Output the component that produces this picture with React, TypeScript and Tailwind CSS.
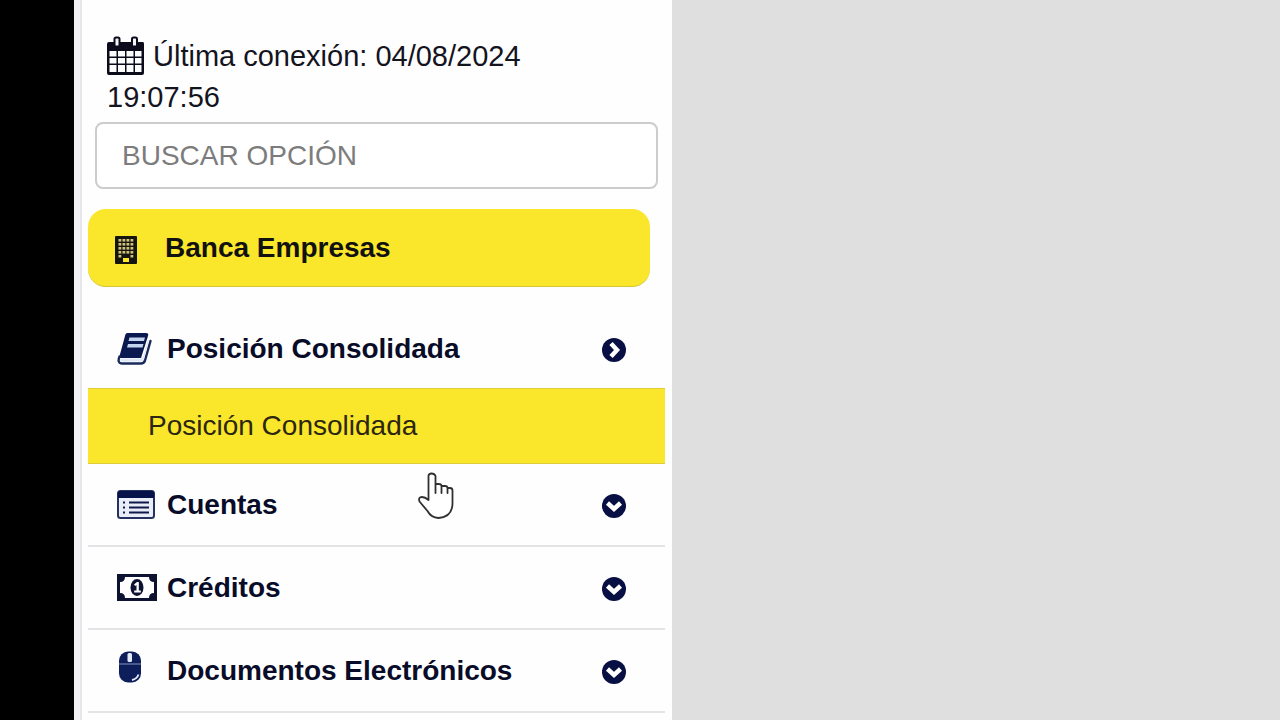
import type { ReactNode } from "react";

function CalendarIcon() {
  return (
    <svg viewBox="0 0 38 40" className="mr-2 inline-block h-10 w-[38px] align-[-10px]" fill="#0b0b1c" aria-hidden="true">
      <path
        fillRule="evenodd"
        d="M2 6H36Q37 6 37 8V37Q37 39 35 39H2Q0 39 0 37V8Q0 6 2 6ZM2.500 15V20.500H9.500V15ZM11 15V20.500H18V15ZM19.500 15V20.500H26.500V15ZM28 15V20.500H34.500V15ZM2.500 22V27.500H9.500V22ZM11 22V27.500H18V22ZM19.500 22V27.500H26.500V22ZM28 22V27.500H34.500V22ZM2.500 29V36H9.500V29ZM11 29V36H18V29ZM19.500 29V36H26.500V29ZM28 29V36H34.500V29Z"
      />
      <rect x="7.500" y="1.500" width="5" height="9" rx="1.500" fill="#f4f4f8" stroke="#0b0b1c" strokeWidth="2" />
      <rect x="25" y="1.500" width="5" height="9" rx="1.500" fill="#f4f4f8" stroke="#0b0b1c" strokeWidth="2" />
    </svg>
  );
}

function BuildingIcon() {
  const rows = [3, 7, 11, 15];
  const cols = [3.5, 7.5, 11.5, 15.5];
  return (
    <svg viewBox="0 0 22 28" className="h-7 w-[22px]" aria-hidden="true">
      <rect width="22" height="28" rx="1" fill="#16140f" />
      {rows.map((y) =>
        cols.map((x) => <rect key={`${x}-${y}`} x={x} y={y} width="2.8" height="2.600" fill="#cfc27a" />),
      )}
      <path d="M3.500 19h2.800v2.600H3.500zM15.500 19h2.800v2.600h-2.800z" fill="#cfc27a" />
      <path d="M8 22h6v4H8z" fill="#fae62a" />
    </svg>
  );
}

function BookIcon() {
  return (
    <svg viewBox="0 0 35 33" className="h-[33px] w-[35px]" aria-hidden="true">
      <path d="M10.500 1H29Q32 1 31 4L24 26H2L8 4Q8.500 1 10.500 1Z" fill="#0a1850" />
      <path d="M2.500 24.500Q0 31 4.500 31.500H24Q27 31.500 28 28.500L33.500 9" fill="none" stroke="#1b2a5c" strokeWidth="2.400" strokeLinecap="round" />
      <path d="M4 26.500H23.500Q25.500 26.500 26.500 23.500L31 8L32 8.500L27 26.500Q26 29.500 23.500 29.500H5Q2.500 29 4 26.500Z" fill="#dfe8f6" />
      <path d="M12.500 5.500H28L27 9H11.500ZM11 12H26.500L25.500 15.500H10Z" fill="#c2d4ee" />
    </svg>
  );
}

function ListIcon() {
  return (
    <svg viewBox="0 0 38 29" className="h-[29px] w-[38px]" aria-hidden="true">
      <rect x="1" y="1" width="36" height="27" rx="2.500" fill="#e8edf8" stroke="#25325f" strokeWidth="2" />
      <path d="M1 8V3q0-2 2-2h32q2 0 2 2v5z" fill="#06124a" />
      <path d="M12 12.500h20M12 17.500h20M12 22.500h20" stroke="#101a48" strokeWidth="2" />
      <path d="M6 12.500h2M6 17.500h2M6 22.500h2" stroke="#101a48" strokeWidth="2" />
    </svg>
  );
}

function MoneyIcon() {
  return (
    <svg viewBox="0 0 40 27" className="h-[27px] w-10" aria-hidden="true">
      <path
        fillRule="evenodd"
        fill="#0d1230"
        d="M0 0H40V27H0ZM8 3Q8 8 3 8V19Q8 19 8 24H32Q32 19 37 19V8Q32 8 32 3Z"
      />
      <ellipse cx="20" cy="13.500" rx="6.500" ry="8.500" fill="#0d1230" />
      <path d="M17 10.500l3-2.500h1.800v8.500h2v2h-6.600v-2h2.300v-5.500l-1.300 1z" fill="#fff" />
    </svg>
  );
}

function MouseIcon() {
  return (
    <svg viewBox="0 0 24 32" className="mb-2 ml-px h-8 w-6" aria-hidden="true">
      <rect x="1" y="0.500" width="22" height="31" rx="9" fill="#0d1e5a" />
      <path d="M1 13h22" stroke="#7380b0" strokeWidth="1.200" />
      <rect x="9.500" y="2" width="4.500" height="9" rx="1.500" fill="#e4eaf8" />
      <path d="M14 29Q19 28 20.500 23.500" fill="none" stroke="#e4eaf8" strokeWidth="1.800" />
    </svg>
  );
}

function CircleChevron({ open = false }: { open?: boolean }) {
  return (
    <svg viewBox="0 0 24 24" className="mt-0.5 h-6 w-6 shrink-0" aria-hidden="true">
      <circle cx="12" cy="12" r="12" fill="#080f42" />
      <path
        d={open ? "M9 5.500l6 6.500-6 6.500" : "M5.500 9l6.500 6 6.500-6"}
        fill="none"
        stroke="#fff"
        strokeWidth="4.500"
      />
    </svg>
  );
}

function HandPointer() {
  return (
    <svg viewBox="0 0 36 48" className="pointer-events-none absolute top-[472px] left-[418px] h-12 w-9" aria-hidden="true">
      <path
        d="M10.500 28V4Q10.500 1.500 13.500 1.500T17.500 4V12H20.500Q23.500 12 23.500 14H27Q29.500 14 29.500 16H32Q34.500 16 34.500 18.500V32Q34 45 20.500 46Q13 45.500 9.500 39L1.500 29.500Q0 25 4 25Q7 25 10.500 28Z"
        fill="#fff"
      />
      <path
        d="M10.500 28V4Q10.500 1.500 13.500 1.500T17.500 4V21M17.500 12H20.500Q23.500 12 23.500 14V21M23.500 14H27Q29.500 14 29.500 16V21M29.500 16H32Q34.500 16 34.500 18.500V32Q34 45 20.500 46Q13 45.500 9.500 39L1.500 29.500Q0 25 4 25Q7 25 10.500 28"
        fill="none"
        stroke="#303030"
        strokeWidth="1.800"
        strokeLinejoin="round"
        strokeLinecap="round"
      />
    </svg>
  );
}

function MenuRow({ icon, label, open }: { icon: ReactNode; label: string; open?: boolean }) {
  return (
    <button
      type="button"
      aria-expanded={!!open}
      className="flex w-full items-center pr-[39px] pl-[29px] text-left font-bold text-[#080c28]"
    >
      <span className="flex w-[50px] shrink-0">{icon}</span>
      <span className="flex-1">{label}</span>
      <CircleChevron open={open} />
    </button>
  );
}

const sections = [
  { label: "Cuentas", icon: <ListIcon /> },
  { label: "Créditos", icon: <MoneyIcon /> },
  { label: "Documentos Electrónicos", icon: <MouseIcon /> },
];

export default function App() {
  return (
    <div className="relative flex min-h-screen bg-[#dfdfdf] font-['Liberation_Sans',Arial,sans-serif] text-[28px] leading-10">
      <div className="w-[74px] shrink-0 bg-black" />
      <aside className="w-[598px] shrink-0 border-l-[6px] border-[#f2f2f5] bg-[#fefefe]">
        <div className="min-h-screen border-l-2 border-[#e6e6ea] pr-[7px] pl-1.5">
          <p className="pt-9 pr-24 pl-[19px] text-[29px] leading-[41px] text-[#14141f]">
            <CalendarIcon />
            Última conexión: 04/08/2024 19:07:56
          </p>
          <input
            type="search"
            aria-label="Buscar opción"
            placeholder="BUSCAR OPCIÓN"
            className="mt-1 ml-[7px] block h-[67px] w-[563px] rounded-lg border-2 border-[#cccccc] bg-white px-[25px] placeholder:text-[#7c7c7c]"
          />
          <nav aria-label="Menú principal">
            <a
              href="#banca-empresas"
              className="mt-5 mr-[15px] flex h-[78px] items-center rounded-[18px] border-b border-[#d6c635] bg-[#fae62a] pl-[27px] font-bold text-[#111111]"
            >
              <span className="w-[50px] pt-1">
                <BuildingIcon />
              </span>
              Banca Empresas
            </a>
            <div className="flex h-[101px] pt-[22px]">
              <MenuRow icon={<BookIcon />} label="Posición Consolidada" open />
            </div>
            <a
              href="#posicion-consolidada"
              className="flex h-[76px] items-center border-y border-[#ddcd3a] bg-[#fae62a] pl-[60px] text-[#2c2612]"
            >
              Posición Consolidada
            </a>
            {sections.map((section) => (
              <div key={section.label} className="flex h-[83px] border-b-2 border-[#e4e4e6]">
                <MenuRow icon={section.icon} label={section.label} />
              </div>
            ))}
          </nav>
        </div>
      </aside>
      <HandPointer />
    </div>
  );
}
